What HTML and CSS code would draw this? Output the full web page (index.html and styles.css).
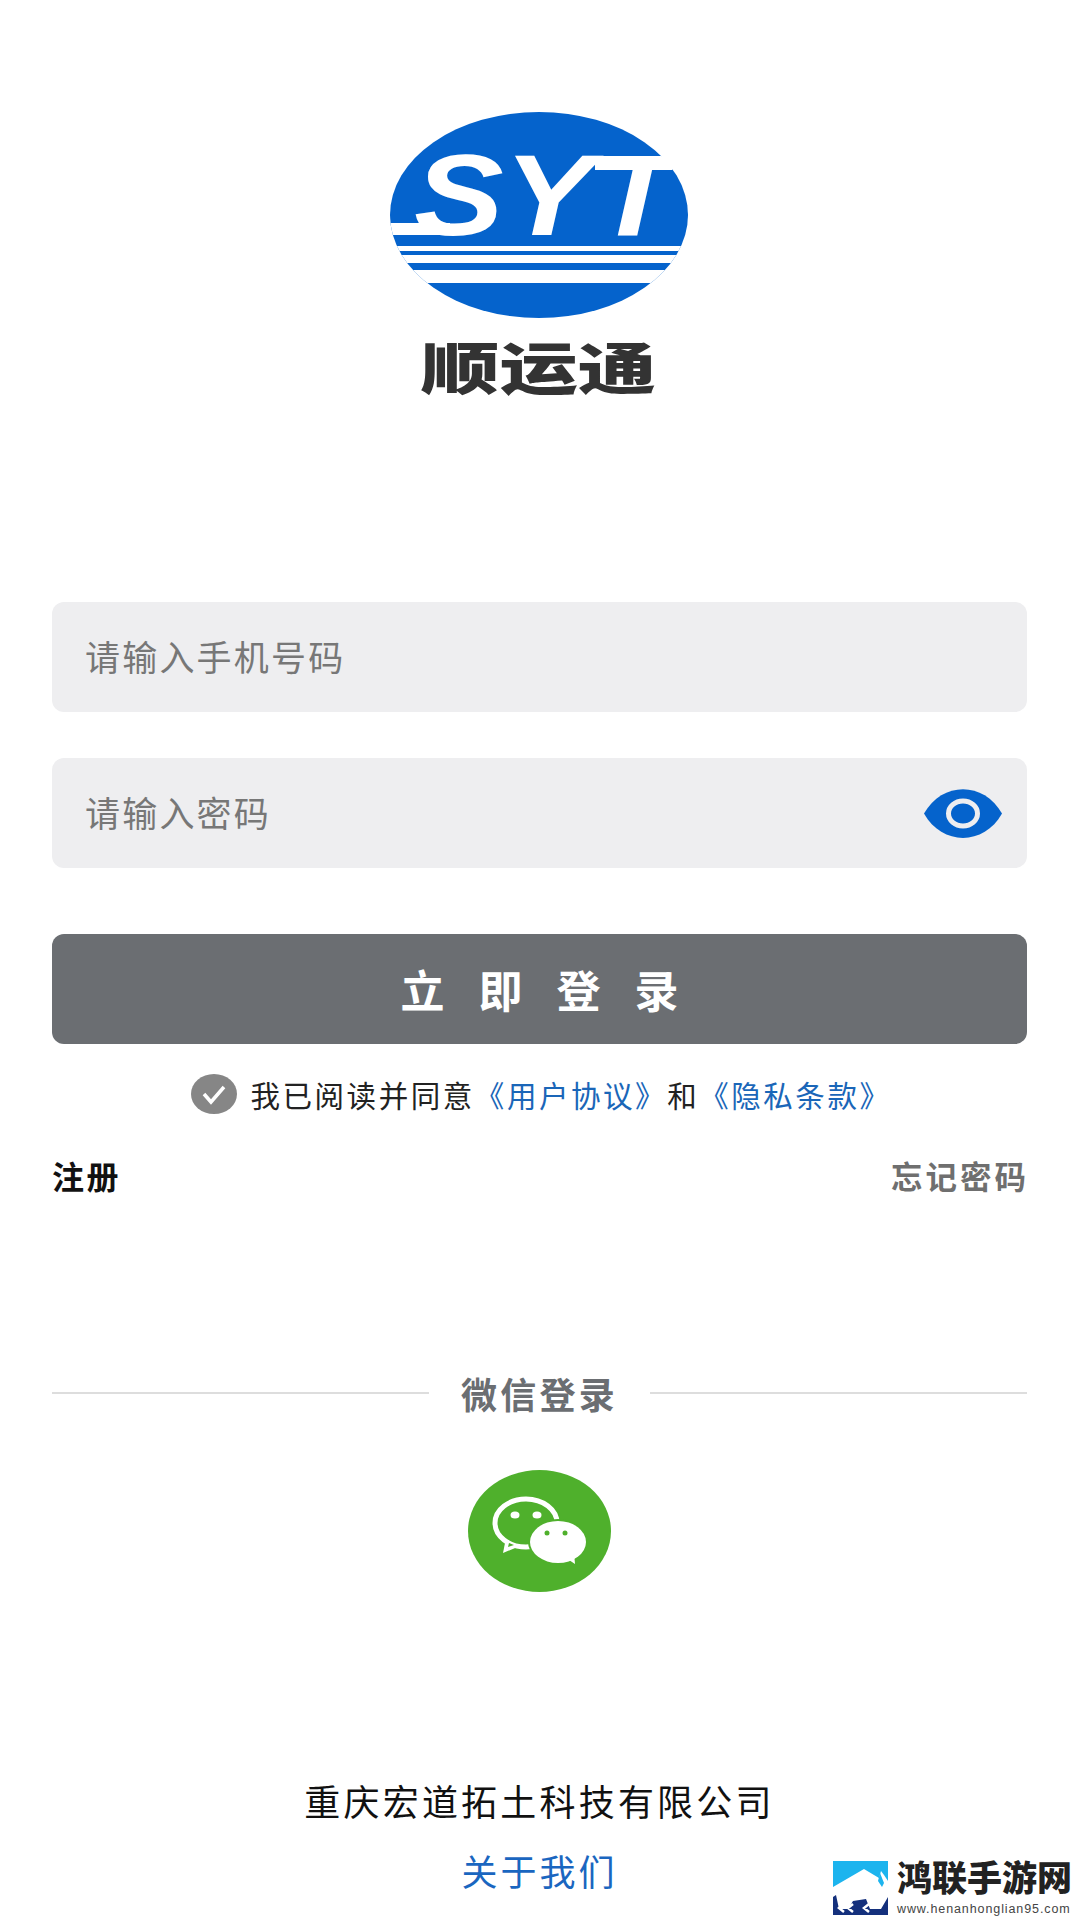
FILE: index.html
```html
<!DOCTYPE html>
<html lang="zh-CN">
<head>
    <meta charset="UTF-8">
    <meta name="viewport" content="width=device-width, initial-scale=1.0">
    <title>顺运通</title>
    <link rel="stylesheet" href="styles.css">
</head>
<body>
    <div class="page">
        <svg class="logo" viewBox="0 0 298 300" width="298" height="300">
            <defs>
                <clipPath id="logo-clip"><ellipse cx="149" cy="103" rx="149" ry="103"></ellipse></clipPath>
            </defs>
            <g clip-path="url(#logo-clip)">
                <rect width="298" height="206" fill="#0563cc"></rect>
                <rect x="0" y="111" width="60" height="12" fill="#fff"></rect>
                <rect x="205" y="44" width="93" height="14" fill="#fff"></rect>
                <rect y="134" width="298" height="5" fill="#fff"></rect>
                <rect y="143" width="298" height="8" fill="#fff"></rect>
                <rect y="158" width="298" height="13" fill="#fff"></rect>
            </g>
            <text class="logo-letters" transform="translate(24 123) scale(1.17 1)">SYT</text>
            <text class="logo-name" transform="translate(31 277) scale(1.4 1)">顺运通</text>
        </svg>

        <div class="field field-phone">
            <input type="text" placeholder="请输入手机号码">
        </div>
        <div class="field field-password">
            <input type="password" placeholder="请输入密码">
            <svg class="eye" viewBox="0 0 78 49" width="78" height="49">
                <path d="M0 24.5C18-8 60-8 78 24.5 60 57 18 57 0 24.5Z" fill="#0563cc"></path>
                <ellipse cx="39" cy="24.5" rx="14.5" ry="12.5" fill="#0563cc" stroke="#eeeef0" stroke-width="5"></ellipse>
            </svg>
        </div>

        <button class="login">立即登录</button>

        <div class="agree">
            <svg class="check" viewBox="0 0 46 40" width="46" height="40">
                <ellipse cx="23" cy="20" rx="23" ry="20" fill="#868686"></ellipse>
                <path d="M13 20l7 8 13-15" fill="none" stroke="#fff" stroke-width="3.5"></path>
            </svg>
            <span>我已阅读并同意<a href="#">《用户协议》</a>和<a href="#">《隐私条款》</a></span>
        </div>

        <div class="links">
            <a class="register" href="#">注册</a>
            <a class="forgot" href="#">忘记密码</a>
        </div>

        <div class="divider"><span>微信登录</span></div>

        <svg class="wechat" viewBox="0 0 143 122" width="143" height="122">
            <ellipse cx="71.5" cy="61" rx="71.5" ry="61" fill="#4fb02c"></ellipse>
            <path d="M38 68l-3 15 17-7z" fill="#fff"></path>
            <ellipse cx="58" cy="53" rx="31" ry="24" fill="#4fb02c" stroke="#fff" stroke-width="5"></ellipse>
            <path d="M41 73l-1 4 6-2z" fill="#4fb02c"></path>
            <ellipse cx="47" cy="45" rx="4.5" ry="3.5" fill="#fff"></ellipse>
            <ellipse cx="69" cy="45" rx="4.5" ry="3.5" fill="#fff"></ellipse>
            <ellipse cx="90" cy="72" rx="30" ry="23" fill="#4fb02c"></ellipse>
            <ellipse cx="90" cy="72" rx="28" ry="21" fill="#fff"></ellipse>
            <path d="M98 88l9 6-1-11z" fill="#fff"></path>
            <circle cx="79" cy="63" r="2.5" fill="#4fb02c"></circle>
            <circle cx="97" cy="63" r="2.5" fill="#4fb02c"></circle>
        </svg>

        <div class="company">重庆宏道拓土科技有限公司</div>
        <a class="about" href="#">关于我们</a>
    </div>

    <div class="watermark">
        <svg viewBox="0 0 55 54" width="55" height="54">
            <rect width="55" height="54" fill="#1cb4ee"></rect>
            <rect y="34" width="55" height="20" fill="#14307c"></rect>
            <path d="M0 26L31 8l15 9 2-7 3 4 4 6v16l-7 12H37l-4-10-13 2-5 8H6L3 34 0 36Z" fill="#fff"></path>
            <path d="M47 12l-2 8 4 6 2-4Z" fill="#1cb4ee"></path>
            <path d="M11 43l-5 4 5 4M20 43l-5 4 5 4M36 43l-5 4 5 4" fill="none" stroke="#fff" stroke-width="2.5"></path>
        </svg>
        <div class="watermark-text">
            <div class="watermark-name">鸿联手游网</div>
            <div class="watermark-url">www.henanhonglian95.com</div>
        </div>
    </div>
</body>
</html>
```

FILE: styles.css
```css
* {
    box-sizing: border-box;
}
body {
    margin: 0;
    width: 1080px;
    height: 1920px;
    position: relative;
    overflow: hidden;
    background-color: white;
    font-family: "Noto Sans CJK SC", "Noto Sans", sans-serif;
}
a {
    text-decoration: none;
}
.page {
    display: flex;
    flex-direction: column;
    align-items: center;
    padding: 112px 53px 0 52px;
}
.logo {
    display: block;
    margin-left: -1px;
}
.logo-letters {
    font-family: "Liberation Sans", sans-serif;
    font-style: italic;
    font-weight: 700;
    font-size: 115px;
    fill: white;
}
.logo-name {
    font-size: 56px;
    font-weight: 900;
    fill: #333;
}
.field {
    width: 100%;
    height: 110px;
    display: flex;
    align-items: center;
    padding: 0 25px 0 33px;
    background-color: #eeeef0;
    border-radius: 12px;
}
.field-phone {
    margin-top: 190px;
}
.field-password {
    margin-top: 46px;
}
.field input {
    flex: 1;
    min-width: 0;
    border: none;
    outline: none;
    background: transparent;
    font-family: inherit;
    font-size: 35px;
    letter-spacing: 2.2px;
    padding: 0 0 3px;
}
.field input::placeholder {
    color: #777;
    opacity: 1;
}
.eye {
    display: block;
    flex: none;
}
.login {
    width: 100%;
    height: 110px;
    margin-top: 66px;
    border: none;
    border-radius: 12px;
    background-color: #6b6e72;
    color: white;
    font-family: inherit;
    font-size: 44px;
    font-weight: 700;
    letter-spacing: 34px;
    text-indent: 34px;
}
.agree {
    display: flex;
    align-items: center;
    justify-content: center;
    gap: 13px;
    margin: 30px 0 0 4px;
    height: 40px;
    font-size: 29.5px;
    letter-spacing: 2.55px;
    color: #222;
}
.check {
    display: block;
    flex: none;
}
.agree a {
    color: #1a66b8;
}
.links {
    width: 100%;
    display: flex;
    justify-content: space-between;
    margin-top: 39px;
    font-weight: 700;
    line-height: 44px;
}
.register {
    font-size: 32px;
    letter-spacing: 2.5px;
    color: #111;
}
.forgot {
    font-size: 31.5px;
    letter-spacing: 3px;
    margin-right: -2px;
    color: #6f6f6f;
}
.divider {
    width: 100%;
    display: flex;
    align-items: center;
    gap: 32px;
    margin-top: 174px;
    height: 44px;
    font-size: 36px;
    font-weight: 700;
    letter-spacing: 3.2px;
    color: #6b6e72;
}
.divider::before,
.divider::after {
    content: "";
    flex: 1;
    height: 2px;
    background-color: #dddddd;
}
.wechat {
    display: block;
    margin-top: 55px;
}
.company {
    margin-top: 186px;
    font-size: 36px;
    line-height: 44px;
    letter-spacing: 3.2px;
    color: #111;
}
.about {
    margin-top: 26px;
    font-size: 36px;
    line-height: 44px;
    letter-spacing: 3px;
    color: #1a66c0;
}
.watermark {
    position: absolute;
    left: 833px;
    top: 1861px;
    display: flex;
    gap: 9px;
}
.watermark svg {
    display: block;
}
.watermark-name {
    font-family: "Liberation Serif", "Noto Sans CJK SC", serif;
    font-size: 35px;
    font-weight: 900;
    line-height: 38px;
    color: #222;
    white-space: nowrap;
}
.watermark-url {
    font-family: "Liberation Sans", sans-serif;
    font-size: 12.5px;
    line-height: 14px;
    margin-top: 3px;
    letter-spacing: 0.9px;
    color: #444;
    white-space: nowrap;
}
```
